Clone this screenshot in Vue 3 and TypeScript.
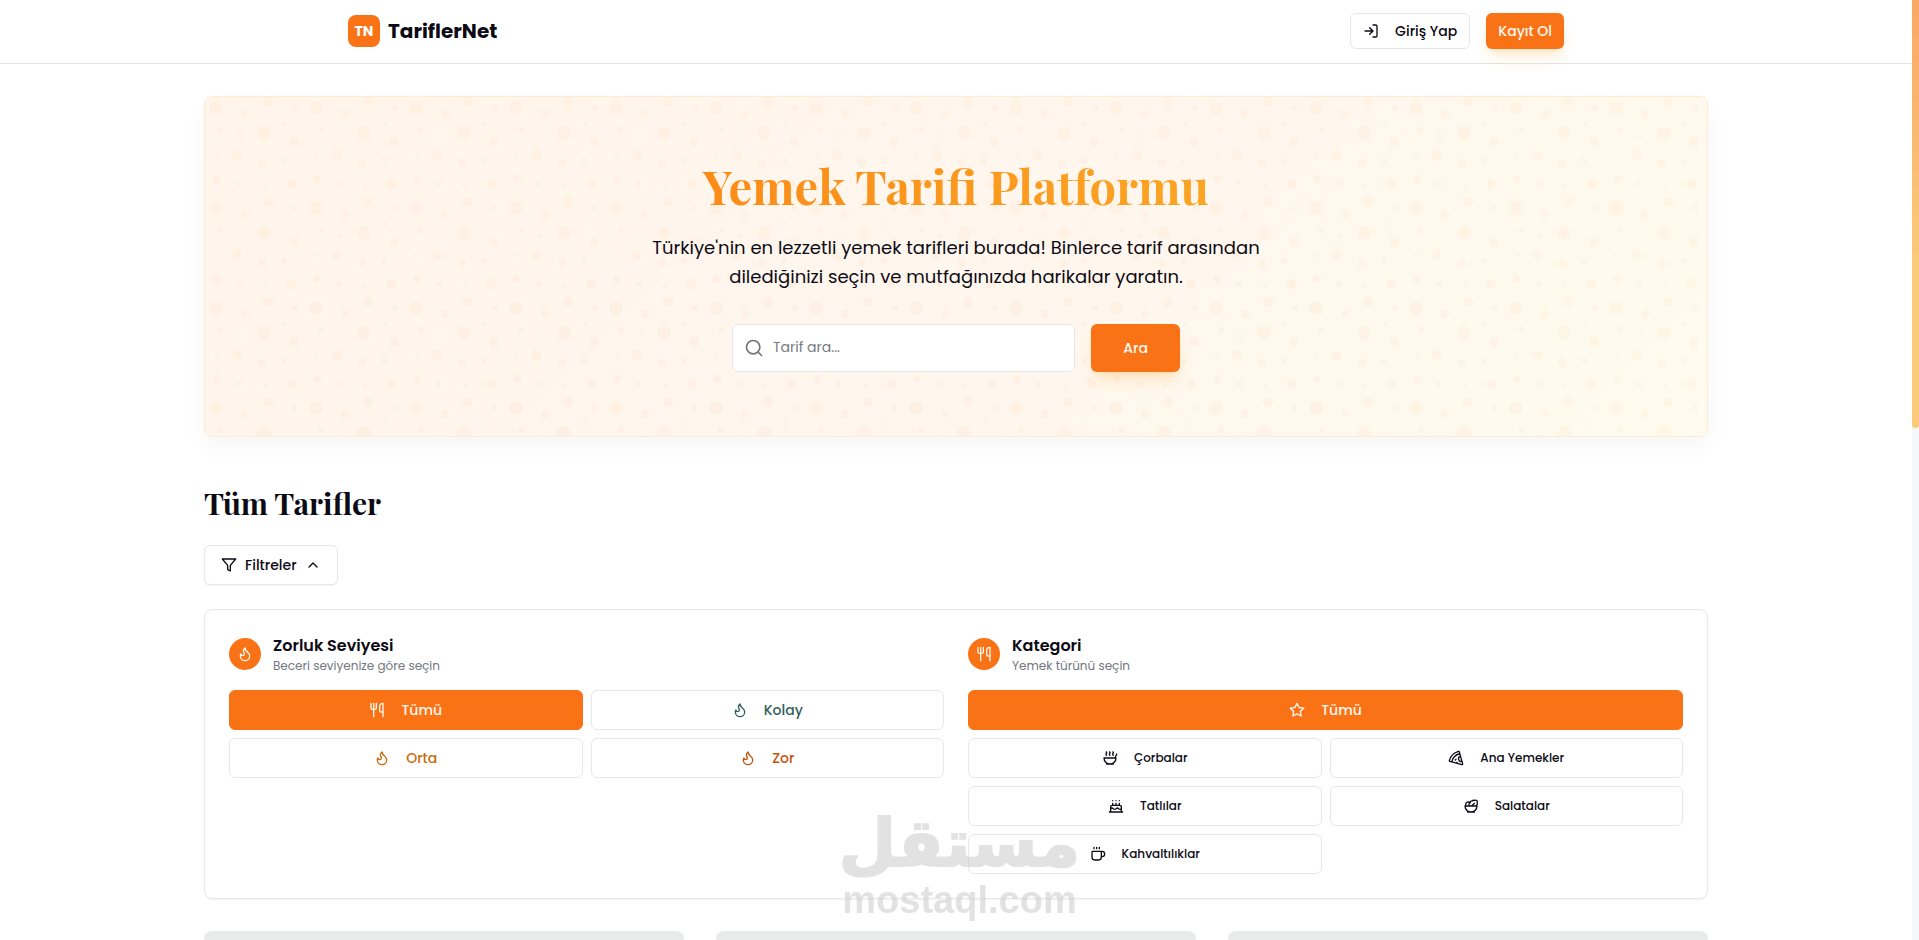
<script setup lang="ts">
import { ref } from 'vue'

type IconName =
  | 'flame' | 'utensils' | 'star' | 'soup' | 'pizza' | 'cake' | 'salad' | 'coffee'
  | 'login' | 'filter' | 'chevron' | 'search'

interface Option {
  label: string
  icon: IconName
  tone?: string
}

const icons: Record<IconName, string> = {
  flame:
    'M8.5 14.5A2.5 2.5 0 0 0 11 12c0-1.38-.5-2-1-3-1.072-2.143-.224-4.054 2-6 .5 2.5 2 4.9 4 6.5 2 1.6 3 3.5 3 5.5a7 7 0 1 1-14 0c0-1.153.433-2.294 1-3a2.5 2.5 0 0 0 2.5 2.5z',
  utensils:
    'M3 2v7c0 1.1.9 2 2 2h4a2 2 0 0 0 2-2V2M7 2v20M21 15V2a5 5 0 0 0-5 5v6c0 1.1.9 2 2 2h3Zm0 0v7',
  star:
    'M12 2l3.09 6.26L22 9.27l-5 4.87 1.18 6.88L12 17.77l-6.18 3.25L7 14.14 2 9.27l6.91-1.01L12 2z',
  soup:
    'M12 21a9 9 0 0 0 9-9H3a9 9 0 0 0 9 9ZM7 21h10M19.5 12 22 6M16.25 3c.27.1.8.53.75 1.36-.06.83-.93 1.2-1 2.02-.05.78.34 1.24.73 1.62M11.25 3c.27.1.8.53.74 1.36-.05.83-.93 1.2-.98 2.02-.06.78.33 1.24.72 1.62M6.25 3c.27.1.8.53.75 1.36-.06.83-.93 1.2-1 2.02-.05.78.34 1.24.74 1.62',
  pizza:
    'M12 14l-1 1M13.75 18.25l-1.25 1.42M17.775 5.654a15.68 15.68 0 0 0-12.121 12.12M18.8 9.3a1 1 0 0 0 2.1 7.7M21.964 20.732a1 1 0 0 1-1.232 1.232l-18-5a1 1 0 0 1-.695-1.232A19.68 19.68 0 0 1 15.732 2.037a1 1 0 0 1 1.232.695z',
  cake:
    'M20 21v-8a2 2 0 0 0-2-2H6a2 2 0 0 0-2 2v8M4 16s.5-1 2-1 2.5 2 4 2 2.5-2 4-2 2.5 2 4 2 2-1 2-1M2 21h20M7 8v3M12 8v3M17 8v3M7 4h.01M12 4h.01M17 4h.01',
  salad:
    'M7 21h10M12 21a9 9 0 0 0 9-9H3a9 9 0 0 0 9 9ZM11.38 12a2.4 2.4 0 0 1-.4-4.77 2.4 2.4 0 0 1 3.2-2.77 2.4 2.4 0 0 1 3.47-.63 2.4 2.4 0 0 1 3.37 3.37 2.4 2.4 0 0 1-1.1 3.7 2.51 2.51 0 0 1 .03 1.1M13 12l4-4M10.9 7.25A3.99 3.99 0 0 0 4 10c0 .73.2 1.41.54 2',
  coffee:
    'M10 2v2M14 2v2M6 2v2M16 8a1 1 0 0 1 1 1v8a4 4 0 0 1-4 4H7a4 4 0 0 1-4-4V9a1 1 0 0 1 1-1h14a4 4 0 1 1 0 8h-1',
  login: 'M15 3h4a2 2 0 0 1 2 2v14a2 2 0 0 1-2 2h-4M10 17l5-5-5-5M15 12H3',
  filter: 'M22 3H2l8 9.46V19l4 2v-8.54L22 3z',
  chevron: 'M18 15l-6-6-6 6',
  search: 'M11 3a8 8 0 1 0 0 16 8 8 0 0 0 0-16zM21 21l-4.3-4.3',
}

const bubbles: [number, number, number][] = [
  [11, 11, 7], [59, 36, 7], [63, 5, 5], [86, 87, 5], [32, 58, 5], [89, 45, 5],
  [12, 82, 4], [40, 17, 4], [57, 66, 4], [16, 33, 3], [79, 64, 3], [34, 87, 3],
  [90, 11, 3], [80, 27, 2], [60, 89, 2], [35, 39, 2], [12, 58, 2],
]

const levels: Option[] = [
  { label: 'Tümü', icon: 'utensils' },
  { label: 'Kolay', icon: 'flame', tone: 'green' },
  { label: 'Orta', icon: 'flame', tone: 'amber' },
  { label: 'Zor', icon: 'flame', tone: 'rust' },
]

const categories: Option[] = [
  { label: 'Tümü', icon: 'star' },
  { label: 'Çorbalar', icon: 'soup' },
  { label: 'Ana Yemekler', icon: 'pizza' },
  { label: 'Tatlılar', icon: 'cake' },
  { label: 'Salatalar', icon: 'salad' },
  { label: 'Kahvaltılıklar', icon: 'coffee' },
]

const query = ref('')
const filtersOpen = ref(true)
const level = ref('Tümü')
const category = ref('Tümü')
</script>

<template>
  <div class="page">
    <header class="topbar">
      <div class="topbar-inner">
        <a class="brand" href="#">
          <span class="brand-mark">TN</span>
          <span class="brand-name">TariflerNet</span>
        </a>
        <nav class="actions">
          <button type="button" class="btn login">
            <svg class="icon" viewBox="0 0 24 24"><path :d="icons.login" /></svg>
            Giriş Yap
          </button>
          <button type="button" class="btn signup">Kayıt Ol</button>
        </nav>
      </div>
    </header>

    <main class="content">
      <section class="hero">
        <svg class="bubbles" aria-hidden="true">
          <defs>
            <pattern id="bubbles" width="100" height="100" patternUnits="userSpaceOnUse">
              <circle v-for="([x, y, r], i) in bubbles" :key="i" :cx="x" :cy="y" :r="r" />
            </pattern>
          </defs>
          <rect width="100%" height="100%" fill="url(#bubbles)" />
        </svg>
        <div class="hero-body">
          <h1>Yemek Tarifi Platformu</h1>
          <p>
            Türkiye'nin en lezzetli yemek tarifleri burada! Binlerce tarif arasından
            dilediğinizi seçin ve mutfağınızda harikalar yaratın.
          </p>
          <form class="search" @submit.prevent>
            <label class="field">
              <svg class="icon" viewBox="0 0 24 24"><path :d="icons.search" /></svg>
              <input v-model="query" type="text" placeholder="Tarif ara..." aria-label="Tarif ara" />
            </label>
            <button type="submit" class="btn submit">Ara</button>
          </form>
        </div>
      </section>

      <h2>Tüm Tarifler</h2>

      <button type="button" class="btn toggle" :aria-expanded="filtersOpen" @click="filtersOpen = !filtersOpen">
        <svg class="icon" viewBox="0 0 24 24"><path :d="icons.filter" /></svg>
        Filtreler
        <svg class="icon" viewBox="0 0 24 24"><path :d="icons.chevron" /></svg>
      </button>

      <section v-if="filtersOpen" class="panel">
        <div class="group">
          <div class="group-head">
            <span class="badge"><svg class="icon" viewBox="0 0 24 24"><path :d="icons.flame" /></svg></span>
            <div>
              <h3>Zorluk Seviyesi</h3>
              <p>Beceri seviyenize göre seçin</p>
            </div>
          </div>
          <div class="options">
            <button
              v-for="o in levels"
              :key="o.label"
              type="button"
              class="btn option"
              :class="[o.tone, { active: level === o.label }]"
              @click="level = o.label"
            >
              <svg class="icon" viewBox="0 0 24 24"><path :d="icons[o.icon]" /></svg>
              {{ o.label }}
            </button>
          </div>
        </div>

        <div class="group">
          <div class="group-head">
            <span class="badge"><svg class="icon" viewBox="0 0 24 24"><path :d="icons.utensils" /></svg></span>
            <div>
              <h3>Kategori</h3>
              <p>Yemek türünü seçin</p>
            </div>
          </div>
          <div class="options">
            <button
              v-for="(o, i) in categories"
              :key="o.label"
              type="button"
              class="btn option"
              :class="[i === 0 ? 'wide' : 'small', { active: category === o.label }]"
              @click="category = o.label"
            >
              <svg class="icon" viewBox="0 0 24 24"><path :d="icons[o.icon]" /></svg>
              {{ o.label }}
            </button>
          </div>
        </div>
      </section>

      <section class="cards" aria-busy="true">
        <div v-for="n in 3" :key="n" class="skeleton"></div>
      </section>
    </main>

    <div class="watermark">
      <span class="mark-ar" lang="ar" dir="rtl">مستقل</span>
      <span class="mark-en">mostaql.com</span>
    </div>

    <div class="scrollbar" aria-hidden="true"><div class="thumb"></div></div>
  </div>
</template>

<style>
body {
  margin: 0;
  background: #fff;
}
</style>

<style scoped>
.page {
  position: relative;
  box-sizing: border-box;
  height: 100vh;
  overflow: hidden;
  padding-right: 7px;
  color: #0c0a14;
  font-family: Poppins, Inter, 'Open Sans', sans-serif;
  font-size: 14px;
  line-height: 20px;
}

h1, h2, h3, p {
  margin: 0;
}

.icon {
  flex: none;
  width: 16px;
  height: 16px;
  fill: none;
  stroke: currentColor;
  stroke-width: 2;
  stroke-linecap: round;
  stroke-linejoin: round;
}

.btn {
  display: inline-flex;
  align-items: center;
  justify-content: center;
  box-sizing: border-box;
  border: 1px solid #e5e7eb;
  border-radius: 6px;
  background: #fff;
  color: inherit;
  font: inherit;
  font-weight: 500;
  white-space: nowrap;
  cursor: pointer;
}

.topbar {
  box-sizing: border-box;
  height: 64px;
  border-bottom: 1px solid #e2e3e6;
}

.topbar-inner {
  display: flex;
  align-items: center;
  justify-content: space-between;
  box-sizing: border-box;
  max-width: 1280px;
  height: 62px;
  margin: 0 auto;
  padding: 0 32px;
}

.brand {
  display: flex;
  align-items: center;
  gap: 8px;
  color: inherit;
  text-decoration: none;
}

.brand-mark {
  display: grid;
  place-items: center;
  width: 32px;
  height: 32px;
  border-radius: 8px;
  background: #f97316;
  color: #fff;
  font-weight: 700;
}

.brand-name {
  font-size: 20px;
  line-height: 28px;
  font-weight: 700;
}

.actions {
  display: flex;
  gap: 16px;
}

.login {
  height: 36px;
  padding: 0 12px;
  gap: 16px;
}

.signup,
.submit {
  border: 0;
  background: #f97316;
  color: #fff8f0;
  box-shadow: 0 10px 15px -3px rgba(249, 155, 22, 0.2), 0 4px 6px -4px rgba(249, 155, 22, 0.2);
}

.signup {
  height: 36px;
  padding: 0 12px;
}

.content {
  box-sizing: border-box;
  max-width: 1536px;
  margin: 0 auto;
  padding: 32px 16px;
}

.hero {
  position: relative;
  overflow: hidden;
  border: 1px solid #ffebd2;
  border-radius: 8px;
  background: linear-gradient(135deg, #fff5eb, #fff6ed 50%, #fffbee);
  box-shadow: 0 10px 24px rgba(0, 0, 0, 0.04);
}

.bubbles {
  position: absolute;
  inset: 0;
  width: 100%;
  height: 100%;
  fill: #f9802a;
  opacity: 0.04;
}

.hero-body {
  position: relative;
  display: flex;
  flex-direction: column;
  align-items: center;
  padding: 64px 16px;
  text-align: center;
}

h1,
h2 {
  font-family: 'Playfair Display', 'Liberation Serif', serif;
  font-weight: 700;
}

h1 {
  width: 100%;
  max-width: 768px;
  margin-bottom: 16px;
  padding-bottom: 6px;
  background: linear-gradient(to right, #fb8514, #fbab28);
  -webkit-background-clip: text;
  background-clip: text;
  color: transparent;
  font-size: 47px;
  line-height: 50px;
}

.hero p {
  max-width: 640px;
  margin-bottom: 33px;
  font-size: 18px;
  line-height: 29px;
}

.search {
  display: flex;
  gap: 16px;
  width: 100%;
  max-width: 448px;
}

.field {
  position: relative;
  flex: 1;
  display: flex;
}

.field .icon {
  position: absolute;
  left: 12px;
  top: 14px;
  width: 20px;
  height: 20px;
  color: #7a7572;
}

.field input {
  box-sizing: border-box;
  width: 100%;
  height: 48px;
  padding: 0 12px 2px 40px;
  border: 1px solid #e5e7eb;
  border-radius: 6px;
  background: #fff;
  color: inherit;
  font: inherit;
}

.field input::placeholder {
  color: #757980;
}

.submit {
  height: 48px;
  padding: 0 32px;
}

h2 {
  margin: 48px 0 24px;
  font-size: 30px;
  line-height: 36px;
}

.toggle {
  height: 40px;
  padding: 0 16px;
  gap: 8px;
  box-shadow: 0 1px 2px rgba(0, 0, 0, 0.05);
}

.panel {
  display: grid;
  grid-template-columns: 1fr 1fr;
  gap: 24px;
  margin-top: 24px;
  padding: 24px;
  border: 1px solid #e5e7eb;
  border-radius: 8px;
  box-shadow: 0 1px 2px rgba(0, 0, 0, 0.05);
}

.group-head {
  display: flex;
  align-items: center;
  gap: 12px;
  margin-bottom: 16px;
}

.badge {
  display: grid;
  place-items: center;
  width: 32px;
  height: 32px;
  border-radius: 50%;
  background: #f97316;
  color: #fff8f0;
}

h3 {
  font-size: 16px;
  line-height: 24px;
  font-weight: 600;
}

.group-head p {
  color: #73777f;
  font-size: 12px;
  line-height: 16px;
}

.options {
  display: grid;
  grid-template-columns: 1fr 1fr;
  gap: 8px;
}

.option {
  height: 40px;
  gap: 16px;
}

.small {
  font-size: 12px;
}

.wide {
  grid-column: 1 / -1;
}

.green {
  color: #35605a;
}

.amber {
  color: #ca6a0a;
}

.rust {
  color: #c2540c;
}

.active {
  border-color: #f97316;
  background: #f97316;
  color: #fff8f0;
}

.cards {
  display: grid;
  grid-template-columns: repeat(3, 1fr);
  gap: 32px;
  margin-top: 32px;
}

.skeleton {
  height: 192px;
  border-radius: 8px;
  background: #e9eaea;
}

.watermark {
  position: absolute;
  left: 50%;
  bottom: 20px;
  display: flex;
  flex-direction: column;
  align-items: center;
  transform: translateX(-50%);
  color: #cfcfd2;
  opacity: 0.6;
  font-weight: 700;
  pointer-events: none;
}

.mark-ar {
  font-family: 'DejaVu Sans', sans-serif;
  font-size: 66px;
  line-height: 72px;
  -webkit-text-stroke: 2px #cfcfd2;
}

.mark-en {
  font-family: 'Liberation Sans', sans-serif;
  font-size: 38px;
  line-height: 40px;
}

.scrollbar {
  position: absolute;
  top: 0;
  right: 0;
  bottom: 0;
  width: 7px;
  background: #f5f7f9;
}

.thumb {
  height: 45.5%;
  border-radius: 0 0 4px 4px;
  background: linear-gradient(#f9a866, #f9ca78 60%);
}
</style>
